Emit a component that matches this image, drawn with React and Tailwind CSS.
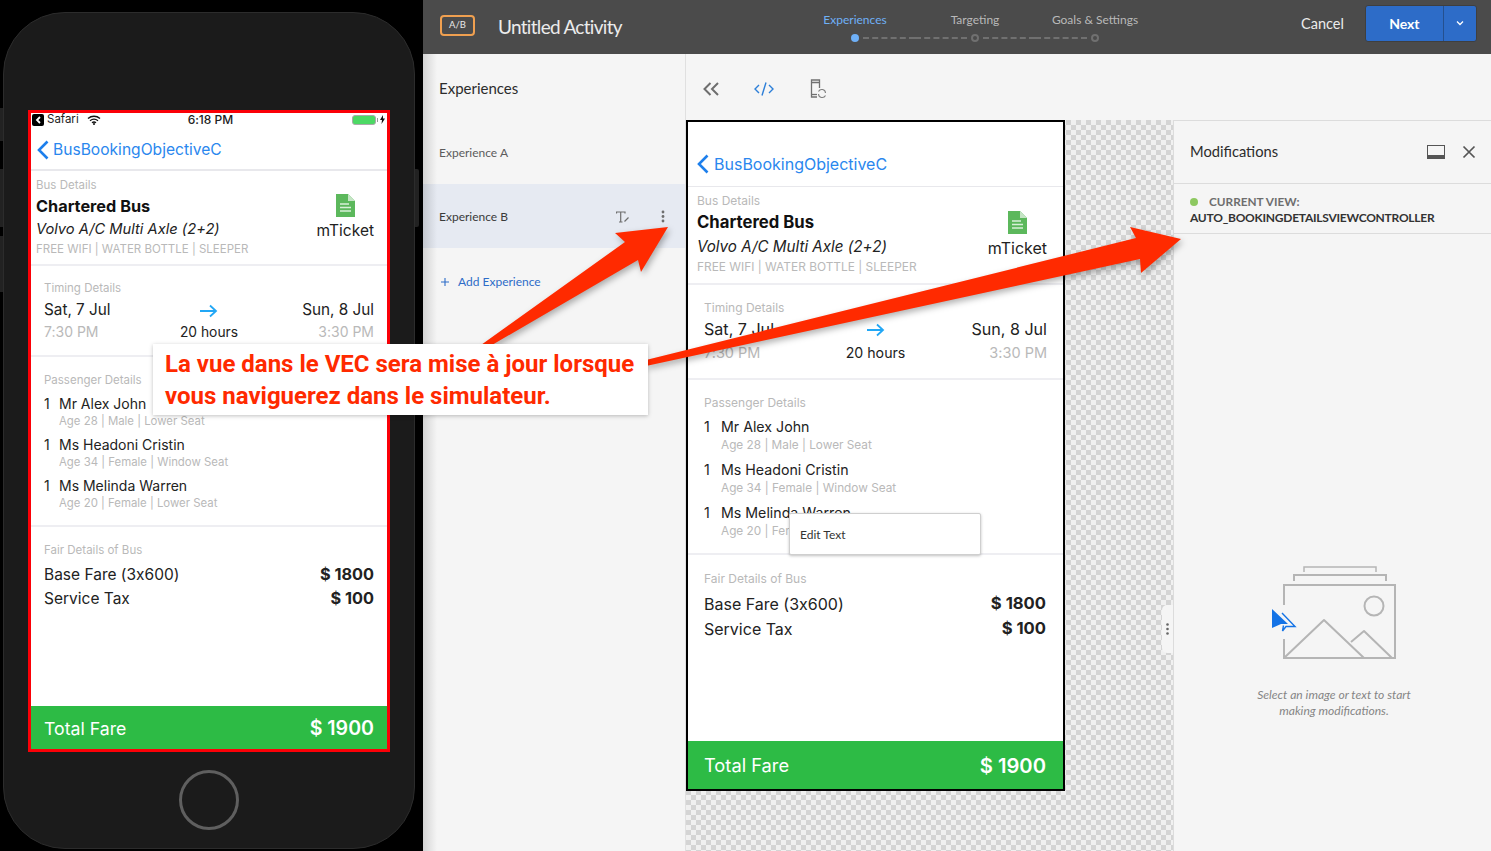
import React from 'react';

const phone = {
  frame: 'h-[642px] w-[362px] border-[3px] border-[#fb0007]',
  nav: 'h-[58px] border-b-2',
  navRow: 'mt-[13px] pl-[6px] gap-[4px]',
  navText: 'text-[15.600px]',
  bus: 'h-[95px] pl-[5px] pr-[13px] border-b-2',
  label: 'text-[11.500px]',
  busLabelTop: 'pt-[7px]',
  busTitle: 'mt-[3px] text-[16.300px]',
  busSub: 'mt-[1px] text-[14.700px]',
  busTags: 'mt-[2px] text-[11.500px]',
  ticket: 'pt-[23px]',
  ticketText: 'mt-[3px] text-[15.500px]',
  timing: 'h-[91px] px-[13px] pt-[15px] border-b-2',
  gapA: 'mt-[4px] text-[15.300px]',
  gapB: 'mt-0 text-[14px]',
  hours: 'text-[13.800px]',
  pass: 'h-[170px] px-[13px] pt-[16px] border-b-2',
  passLabel: '',
  nameGap: 'mt-[6px] text-[14px]',
  numCol: 'w-[15px]',
  ageGap: '-mt-[1px] pl-[15px] text-[11.400px]',
  fair: 'px-[13px] pt-[16px]',
  fareGap: 'mt-[6px] text-[15.500px]',
  taxGap: 'mt-[1px] text-[15.500px]',
  amount: 'text-[16.300px]',
  total: 'h-[43px] px-[13px] pt-[3px]',
  totalLabel: 'text-[17.700px]',
  totalAmount: 'text-[19.600px]',
};

const sim = {
  frame: 'h-[671px] w-[379px] border-2 border-black',
  nav: 'h-[65px] border-b',
  navRow: 'mt-[31px] pl-[9px] gap-[5px]',
  navText: 'text-[16px]',
  bus: 'h-[98px] pl-[9px] pr-[16px] border-b-2',
  label: 'text-[12px]',
  busLabelTop: 'pt-[7px]',
  busTitle: 'mt-[3px] text-[16.700px]',
  busSub: 'mt-[3px] text-[15.200px]',
  busTags: 'mt-[2px] text-[11.900px]',
  ticket: 'pt-[24px]',
  ticketText: 'mt-[3px] text-[16px]',
  timing: 'h-[95px] px-[16px] pt-[16px] border-b-2',
  gapA: 'mt-[3px] text-[16.100px]',
  gapB: 'mt-[2px] text-[14.500px]',
  hours: 'text-[14.200px]',
  pass: 'h-[175px] px-[16px] pt-[16px] border-b-2',
  passLabel: '-mb-[1px]',
  nameGap: 'mt-[7px] text-[14.200px]',
  numCol: 'w-[17px]',
  ageGap: 'mt-0 pl-[17px] text-[11.800px]',
  fair: 'px-[16px] pt-[17px]',
  fareGap: 'mt-[6px] text-[16px]',
  taxGap: 'mt-[2px] text-[16px]',
  amount: 'mr-[1px] text-[16.600px]',
  total: 'h-[48px] px-[16px] pt-[2px]',
  totalLabel: 'text-[18.300px]',
  totalAmount: 'mr-[1px] text-[20.200px]',
};

const passengers = [
  { name: 'Mr Alex John', info: 'Age 28 | Male | Lower Seat' },
  { name: 'Ms Headoni Cristin', info: 'Age 34 | Female | Window Seat' },
  { name: 'Ms Melinda Warren', info: 'Age 20 | Female | Lower Seat' },
];

const TicketIcon = () => (
  <svg width="19" height="23" viewBox="0 0 19 23">
    <path d="M0 0H12L19 7V23H0Z" fill="#5cb85c" />
    <path d="M12 0L19 7H12Z" fill="#c5e5c5" />
    <path d="M4 10H13M4 13.500H15M4 17H15" stroke="#d8f0d8" strokeWidth="1.300" />
  </svg>
);

const StatusBar = () => (
  <div className="relative flex h-[13px] items-center pl-[1px] pr-[2px] text-[11.500px] leading-[13px] text-[#222]">
    <div className="flex h-[12px] w-[12px] items-center justify-center rounded-[2px] bg-black">
      <svg width="6" height="8" viewBox="0 0 6 8"><path d="M5 1L2 4L5 7" fill="none" stroke="#fff" strokeWidth="1.800" /></svg>
    </div>
    <span className="ml-[3px]">Safari</span>
    <svg className="ml-[8px]" width="14" height="10" viewBox="0 0 14 10">
      <path d="M1 3.500C4.500 .5 9.500 .5 13 3.500M3 5.700C5.500 3.700 8.500 3.700 11 5.700M5 7.700C6.200 6.800 7.800 6.800 9 7.700" fill="none" stroke="#111" strokeWidth="1.400" />
      <circle cx="7" cy="9" r="1" fill="#111" />
    </svg>
    <span className="ml-[87px] text-[12px] font-medium">6:18 PM</span>
    <div className="ml-auto flex items-center">
      <div className="h-[10px] w-[24px] rounded-[3px] border border-[#aaa] bg-[#4cd964]" />
      <div className="ml-[1px] h-[4px] w-[1px] bg-[#999]" />
      <svg className="ml-[2px]" width="5" height="9" viewBox="0 0 5 9"><path d="M3 0L0 5H2L1.500 9L5 3.500H3Z" fill="#111" /></svg>
    </div>
  </div>
);

const BusScreen = ({ c, status, children }) => (
  <div className={`relative flex shrink-0 flex-col bg-white font-['Inter',sans-serif] [font-feature-settings:'calt'_0] ${c.frame}`}>
    <div className={`border-[#e8e8ec] ${c.nav}`}>
      {status && <StatusBar />}
      <div className={`flex h-[22px] items-center text-[#2a87ee] ${c.navRow}`}>
        <svg width="12" height="20" viewBox="0 0 12 20">
          <path d="M10.500 1.500L2 10L10.500 18.500" fill="none" stroke="#1d7fec" strokeWidth="2.600" />
        </svg>
        <span className={`leading-[22px] ${c.navText}`}>BusBookingObjectiveC</span>
      </div>
    </div>

    <div className={`flex justify-between border-[#eeeef2] ${c.bus}`}>
      <div>
        <div className={`leading-[14px] text-[#b9b9b9] ${c.label} ${c.busLabelTop}`}>Bus Details</div>
        <div className={`font-bold leading-[22px] text-[#111] ${c.busTitle}`}>Chartered Bus</div>
        <div className={`italic leading-[22px] text-[#222] ${c.busSub}`}>Volvo A/C Multi Axle (2+2)</div>
        <div className={`leading-[14px] text-[#b9b9b9] ${c.busTags}`}>FREE WIFI | WATER BOTTLE | SLEEPER</div>
      </div>
      <div className={`flex flex-col items-center ${c.ticket}`}>
        <TicketIcon />
        <div className={`leading-[22px] text-[#222] ${c.ticketText}`}>mTicket</div>
      </div>
    </div>

    <div className={`border-[#eeeef2] ${c.timing}`}>
      <div className={`leading-[14px] text-[#b9b9b9] ${c.label}`}>Timing Details</div>
      <div className={`flex h-[22px] items-center justify-between leading-[22px] text-[#222] ${c.gapA}`}>
        <span className="w-[100px]">Sat, 7 Jul</span>
        <svg className="mt-[2px]" width="18" height="14" viewBox="0 0 18 14">
          <path d="M0 7H16M10 1.500L16 7L10 12.500" fill="none" stroke="#22a7f5" strokeWidth="1.800" />
        </svg>
        <span className="w-[100px] text-right">Sun, 8 Jul</span>
      </div>
      <div className={`flex h-[22px] items-center justify-between leading-[22px] text-[#b9b9b9] ${c.gapB}`}>
        <span className="w-[100px]">7:30 PM</span>
        <span className={`text-[#222] ${c.hours}`}>20 hours</span>
        <span className="w-[100px] text-right">3:30 PM</span>
      </div>
    </div>

    <div className={`border-[#eeeef2] ${c.pass}`}>
      <div className={`leading-[14px] text-[#b9b9b9] ${c.label} ${c.passLabel}`}>Passenger Details</div>
      {passengers.map((p) => (
        <div key={p.name}>
          <div className={`flex leading-[22px] text-[#222] ${c.nameGap}`}>
            <span className={c.numCol}>1</span>
            <span>{p.name}</span>
          </div>
          <div className={`leading-[14px] text-[#b9b9b9] ${c.ageGap}`}>{p.info}</div>
        </div>
      ))}
    </div>

    <div className={`flex-1 ${c.fair}`}>
      <div className={`leading-[14px] text-[#b9b9b9] ${c.label}`}>Fair Details of Bus</div>
      <div className={`flex justify-between leading-[22px] text-[#222] ${c.fareGap}`}>
        <span className="pt-[1px]">Base Fare (3x600)</span>
        <span className={`font-bold ${c.amount}`}>$ 1800</span>
      </div>
      <div className={`flex justify-between leading-[22px] text-[#222] ${c.taxGap}`}>
        <span className="pt-[1px]">Service Tax</span>
        <span className={`font-bold ${c.amount}`}>$ 100</span>
      </div>
    </div>

    <div className={`flex items-center justify-between bg-[#2dbb45] text-white ${c.total}`}>
      <span className={c.totalLabel}>Total Fare</span>
      <span className={`font-semibold ${c.totalAmount}`}>$ 1900</span>
    </div>
    {children}
  </div>
);

const Phone = () => (
  <div className="relative h-[851px] w-[423px] shrink-0 overflow-hidden bg-black">
    <div className="absolute left-0 top-[108px] h-[33px] w-[4px] bg-[#222]" />
    <div className="absolute left-0 top-[169px] h-[58px] w-[4px] bg-[#222]" />
    <div className="absolute left-0 top-[236px] h-[56px] w-[4px] bg-[#222]" />
    <div className="absolute left-[413px] top-[169px] h-[58px] w-[6px] rounded-r-[2px] bg-[#222]" />
    <div className="relative ml-[3px] mt-[12px] flex h-[837px] w-[412px] flex-col items-start rounded-[62px] border border-[#2c2c2c] bg-[#1b1b1b] pl-[24px] pt-[97px]">
      <BusScreen c={phone} status />
      <div className="ml-[151px] mt-[18px] h-[60px] w-[60px] rounded-full border-[3px] border-[#5f5f5f]" />
    </div>
  </div>
);

const Step = ({ label, active, first, last }) => (
  <div className="flex w-[120px] flex-col items-center">
    <span className={`text-[12px] leading-[16px] ${active ? 'text-[#6fb0f7]' : 'text-[#b9b9b9]'}`}>{label}</span>
    <div className="mt-[6px] flex w-full items-center">
      <div className={`h-0 flex-1 border-t-2 border-dashed ${first ? 'border-transparent' : 'border-[#707070]'}`} />
      {active ? (
        <div className="mx-[4px] h-[8px] w-[8px] rounded-full bg-[#6fb0f7]" />
      ) : (
        <div className="mx-[4px] h-[8px] w-[8px] rounded-full border-2 border-[#707070]" />
      )}
      <div className={`h-0 flex-1 border-t-2 border-dashed ${last ? 'border-transparent' : 'border-[#707070]'}`} />
    </div>
  </div>
);

const Header = () => (
  <div className="flex h-[54px] shrink-0 items-center bg-[#4b4b4b] pl-[17px]">
    <div className="mb-[4px] flex h-[21px] w-[35px] items-center justify-center rounded-[4px] border-2 border-[#f0a050] text-[9.500px] text-[#e8e8e8]">A/B</div>
    <div className="ml-[23px] w-[297px] text-[19px] leading-[26px] tracking-[-0.7px] text-[#ececec]">Untitled Activity</div>
    <div className="flex">
      <Step label="Experiences" active first />
      <Step label="Targeting" />
      <Step label="Goals & Settings" last />
    </div>
    <div className="mb-[6px] ml-[146px] text-[14.500px] text-[#ececec]">Cancel</div>
    <div className="mb-[8px] ml-[21px] flex h-[37px] w-[112px] overflow-hidden rounded-[3px] border border-[#3f3f3f] bg-[#2d6cc8] text-white">
      <div className="flex w-[78px] items-center justify-center border-r border-[#24508f] text-[14px] font-bold">Next</div>
      <div className="flex flex-1 items-center justify-center">
        <svg width="8" height="6" viewBox="0 0 8 6"><path d="M1 1.500L4 4.500L7 1.500" fill="none" stroke="#fff" strokeWidth="1.300" /></svg>
      </div>
    </div>
  </div>
);

const Sidebar = () => (
  <div className="flex w-[263px] shrink-0 flex-col border-r border-[#e0e0e0] bg-[linear-gradient(90deg,#d4d4d4,#f5f5f5_14px)]">
    <div className="flex h-[70px] items-center pb-[2px] pl-[16px] text-[15px] text-[#2c2c2c]">Experiences</div>
    <div className="flex h-[60px] items-center pb-[2px] pl-[16px] text-[12px] text-[#5c5c5c]">Experience A</div>
    <div className="flex h-[64px] items-center bg-[linear-gradient(90deg,#c4c8cf,#e6eaf2_14px)] pl-[16px] pr-[20px] pt-[1px] text-[12px] text-[#3a3a3a]">
      <span>Experience B</span>
      <svg className="ml-auto" width="14" height="12" viewBox="0 0 14 12">
        <path d="M.5 2.500V1H9V2.500M4.700 1V11M3 11H6.500M8.500 10.500L12.500 6.500" fill="none" stroke="#6e6e6e" strokeWidth="1.200" />
      </svg>
      <svg className="ml-[31px]" width="4" height="13" viewBox="0 0 4 13" fill="#6e6e6e">
        <circle cx="2" cy="2" r="1.400" /><circle cx="2" cy="6.500" r="1.400" /><circle cx="2" cy="11" r="1.400" />
      </svg>
    </div>
    <div className="mt-[25px] flex items-center pl-[18px] text-[12px] text-[#2d6cc8]">
      <svg width="8" height="8" viewBox="0 0 8 8"><path d="M4 0V8M0 4H8" stroke="#2d6cc8" strokeWidth="1.100" /></svg>
      <span className="ml-[9px]">Add Experience</span>
    </div>
  </div>
);

const Toolbar = () => (
  <div className="flex h-[66px] shrink-0 items-center bg-[#f5f5f5] pl-[17px] pt-[4px]">
    <svg width="17" height="14" viewBox="0 0 17 14">
      <path d="M7.500 1L1.500 7L7.500 13M15 1L9 7L15 13" fill="none" stroke="#6e6e6e" strokeWidth="2" />
    </svg>
    <svg className="ml-[34px]" width="20" height="14" viewBox="0 0 20 14">
      <path d="M5 3L1 7L5 11M15 3L19 7L15 11M12 .5L8 13.500" fill="none" stroke="#2d7fd8" strokeWidth="1.400" />
    </svg>
    <svg className="ml-[36px]" width="17" height="20" viewBox="0 0 17 20">
      <path d="M7 18H1.500V1H9.500V9M1.500 3.500H9.500" fill="none" stroke="#707070" strokeWidth="1.300" />
      <path d="M1.500 15.500H7" stroke="#707070" strokeWidth="1.300" />
      <path d="M15.500 14A3.700 3.700 0 0 0 8.500 12.500M8.500 15A3.700 3.700 0 0 0 15.500 16.500" fill="none" stroke="#808080" strokeWidth="1.100" />
    </svg>
  </div>
);

const Placeholder = () => (
  <svg className="ml-[98px] mt-[332px] block" width="124" height="93" viewBox="0 0 124 93">
    <g fill="none" stroke="#b5b5b5" strokeWidth="2">
      <path d="M32 6V1H104V6" strokeWidth="1.500" />
      <path d="M22 15V9H114V15" />
      <path d="M12 39V19H123V92H12V73" />
      <circle cx="102" cy="40" r="9.500" />
      <path d="M12 92L52 54L92 92M79 76L92 65L120 92" strokeLinejoin="round" />
    </g>
    <path d="M0 43L16 58L9 58L0 62Z" fill="#1473e6" />
    <path d="M10 47L23 60.500H14L10.500 65L11.500 59.500" fill="none" stroke="#1473e6" strokeWidth="1.400" />
  </svg>
);

const Modifications = () => (
  <div className="relative w-[318px] shrink-0 border-l border-t border-[#dcdcdc] bg-[#f5f5f5]">
    <div className="flex h-[63px] items-center border-b border-[#dcdcdc] pl-[16px] pr-[15px]">
      <span className="pb-[2px] text-[14.700px] text-[#2c2c2c]">Modifications</span>
      <svg className="ml-auto" width="18" height="14" viewBox="0 0 18 14">
        <rect x=".5" y=".5" width="17" height="13" fill="none" stroke="#555" />
        <rect x="1" y="10" width="16" height="3.500" fill="#555" />
      </svg>
      <svg className="ml-[17px]" width="14" height="14" viewBox="0 0 14 14">
        <path d="M1.500 1.500L12.500 12.500M12.500 1.500L1.500 12.500" fill="none" stroke="#555" strokeWidth="1.700" />
      </svg>
    </div>
    <div className="h-[50px] border-b border-[#dcdcdc] pl-[16px] pt-[10px] text-[12px] font-bold leading-[16px]">
      <div className="flex items-center text-[#6e6e6e]">
        <span className="h-[8px] w-[8px] rounded-full bg-[#8dc860]" />
        <span className="ml-[11px] text-[11.800px]">CURRENT VIEW:</span>
      </div>
      <div className="tracking-[-0.25px] text-[#333]">AUTO_BOOKINGDETAILSVIEWCONTROLLER</div>
    </div>
    <Placeholder />
    <div className="mt-[28px] pl-[3px] text-center text-[12.100px] italic leading-[16px] text-[#858585]">
      Select an image or text to start
      <br />
      making modifications.
    </div>
    <div className="absolute -left-[12px] top-[484px] flex h-[48px] w-[11px] items-center justify-center rounded-l-[5px] bg-[#f5f5f5]">
      <svg width="3" height="12" viewBox="0 0 3 12" fill="#666">
        <circle cx="1.500" cy="1.500" r="1.300" /><circle cx="1.500" cy="6" r="1.300" /><circle cx="1.500" cy="10.500" r="1.300" />
      </svg>
    </div>
  </div>
);

const Annotation = () => (
  <>
    <svg className="pointer-events-none absolute left-0 top-0 drop-shadow-[2px_3px_3px_rgba(0,0,0,0.3)]" width="1491" height="851" viewBox="0 0 1491 851">
      <polygon points="481,345 625,242 615,233 668,227 641,272 638,260 492,345" fill="#ff2a00" />
      <polygon points="646,360 1136,238 1130,227 1181,239 1141,273 1140,259 646,366" fill="#ff2a00" />
    </svg>
    <div className="absolute left-[153px] top-[344px] h-[71px] w-[495px] bg-white pl-[12px] pt-[4px] font-['Roboto',sans-serif] text-[24px] font-bold leading-[32px] text-[#ff2a00] shadow-[0_1px_4px_rgba(0,0,0,0.25)]">
      La vue dans le VEC sera mise à jour lorsque
      <br />
      vous naviguerez dans le simulateur.
    </div>
  </>
);

export default function App() {
  return (
    <div className="relative flex h-[851px] w-[1491px] overflow-hidden font-['Lato',sans-serif]">
      <Phone />
      <div className="flex min-w-0 flex-1 flex-col">
        <Header />
        <div className="flex min-h-0 flex-1">
          <Sidebar />
          <div className="flex min-w-0 flex-1 flex-col">
            <Toolbar />
            <div className="flex min-h-0 flex-1">
              <div className="flex-1 bg-[conic-gradient(#f0f0f0_25%,#d4d4d4_0_50%,#f0f0f0_0_75%,#d4d4d4_0)] bg-[length:10px_10px]">
                <BusScreen c={sim}>
                  <div className="absolute left-[101px] top-[391px] flex h-[42px] w-[192px] items-center rounded-[2px] border border-[#cfcfcf] bg-white pl-[10px] pt-[1px] font-['Lato',sans-serif] text-[12px] text-[#333] shadow-[0_1px_3px_rgba(0,0,0,0.25)]">
                    Edit Text
                  </div>
                </BusScreen>
              </div>
              <Modifications />
            </div>
          </div>
        </div>
      </div>
      <Annotation />
    </div>
  );
}
